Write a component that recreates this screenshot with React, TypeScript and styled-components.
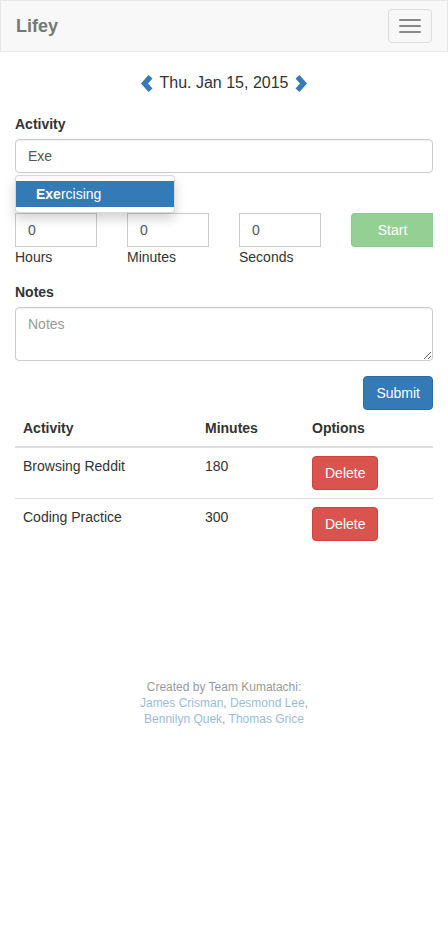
import React from "react";
import styled, { createGlobalStyle } from "styled-components";

const Global = createGlobalStyle`
  html, body { margin: 0; padding: 0; background: #fff; }
  body {
    font-family: "Liberation Sans", Arial, Helvetica, sans-serif;
    font-size: 14px;
    line-height: 1.42857143;
    color: #333;
  }
  * { box-sizing: border-box; }
`;

const Navbar = styled.nav`
  display: flex;
  align-items: flex-start;
  justify-content: space-between;
  height: 52px;
  background: #f8f8f8;
  border: 1px solid #e7e7e7;
  margin-bottom: 20px;
`;

const Brand = styled.a`
  display: block;
  padding: 15px 15px;
  font-size: 18px;
  line-height: 20px;
  font-weight: 700;
  color: #777;
  text-decoration: none;
`;

const Toggle = styled.button`
  display: flex;
  flex-direction: column;
  gap: 4px;
  align-items: center;
  justify-content: center;
  width: 44px;
  height: 34px;
  margin: 8px 15px 0 0;
  padding: 0;
  background: transparent;
  border: 1px solid #ddd;
  border-radius: 4px;
`;

const Bar = styled.span`
  display: block;
  width: 22px;
  height: 2px;
  border-radius: 1px;
  background: #888;
`;

const Container = styled.div`
  padding: 0 15px;
`;

const DateRow = styled.div`
  display: flex;
  justify-content: center;
  align-items: center;
  gap: 7px;
  font-size: 16px;
  line-height: 22px;
  margin-bottom: 20px;
`;

const Chevron = styled.svg`
  display: block;
  width: 12px;
  height: 17px;
`;

const FormGroup = styled.div`
  position: relative;
  margin-bottom: 15px;
`;

const Label = styled.label`
  display: block;
  font-weight: 700;
  margin-bottom: 5px;
`;

const Spacer = styled.div`
  height: 20px;
  margin-bottom: 5px;
`;

const TextInput = styled.input<{ $square?: boolean }>`
  display: block;
  width: 100%;
  height: 34px;
  padding: 6px 12px;
  font-family: inherit;
  font-size: 14px;
  line-height: 20px;
  color: #555;
  background: #fff;
  border: 1px solid #ccc;
  border-radius: ${(p) => (p.$square ? "0" : "4px")};
  box-shadow: ${(p) => (p.$square ? "none" : "inset 0 1px 1px rgba(0,0,0,.075)")};
  outline: none;
`;

const Menu = styled.ul`
  position: absolute;
  top: 61px;
  left: 0;
  z-index: 10;
  width: 160px;
  margin: 0;
  padding: 5px 0;
  list-style: none;
  background: #fff;
  border: 1px solid rgba(0,0,0,.15);
  border-radius: 4px;
  box-shadow: 0 6px 12px rgba(0,0,0,.175);
`;

const MenuItem = styled.li<{ $active?: boolean }>`
  display: block;
  padding: 3px 20px;
  line-height: 20px;
  color: ${(p) => (p.$active ? "#fff" : "#333")};
  background: ${(p) => (p.$active ? "#337ab7" : "transparent")};
  white-space: nowrap;
`;

const DurationGrid = styled.div`
  display: grid;
  grid-template-columns: repeat(4, 82px);
  column-gap: 30px;
`;

const SubLabel = styled.div`
  line-height: 20px;
`;

const Button = styled.button<{ $variant: "primary" | "danger" | "success"; $disabled?: boolean }>`
  display: inline-block;
  height: 34px;
  padding: 6px 12px;
  font-family: inherit;
  font-size: 14px;
  line-height: 20px;
  color: #fff;
  border: 1px solid
    ${(p) => (p.$variant === "primary" ? "#2e6da4" : p.$variant === "danger" ? "#d43f3a" : "#4cae4c")};
  background: ${(p) => (p.$variant === "primary" ? "#337ab7" : p.$variant === "danger" ? "#d9534f" : "#5cb85c")};
  border-radius: 4px;
  opacity: ${(p) => (p.$disabled ? 0.65 : 1)};
`;

const StartButton = styled(Button)`
  width: 82px;
  border-radius: 4px 0 0 4px;
  border-right: none;
`;

const TextArea = styled.textarea`
  display: block;
  width: 100%;
  height: 54px;
  padding: 6px 12px;
  font-family: inherit;
  font-size: 14px;
  line-height: 20px;
  color: #555;
  border: 1px solid #ccc;
  border-radius: 4px;
  box-shadow: inset 0 1px 1px rgba(0,0,0,.075);
  outline: none;
  &::placeholder { color: #999; }
`;

const SubmitRow = styled.div`
  display: flex;
  justify-content: flex-end;
`;

const Table = styled.table`
  width: 100%;
  border-collapse: collapse;
  margin-bottom: 20px;
`;

const Th = styled.th<{ $w?: number }>`
  width: ${(p) => (p.$w ? `${p.$w}px` : "auto")};
  padding: 8px;
  text-align: left;
  line-height: 20px;
  vertical-align: bottom;
  border-bottom: 2px solid #ddd;
`;

const Td = styled.td`
  padding: 8px;
  line-height: 20px;
  vertical-align: top;
  border-top: 1px solid #ddd;
`;

const Row = styled.tr`
  &:first-child td { border-top: 0; }
`;

const Footer = styled.footer`
  padding-top: 110px;
  text-align: center;
  font-size: 12px;
  line-height: 16px;
  opacity: 0.5;
`;

const Link = styled.a`
  color: #337ab7;
  text-decoration: none;
`;

const ChevronLeft = () => (
  <Chevron viewBox="0 0 12 17">
    <polygon points="7.5,0 11.5,3.5 7,8.5 11.5,13.5 7.5,17 0,8.5" fill="#337ab7" />
  </Chevron>
);

const ChevronRight = () => (
  <Chevron viewBox="0 0 12 17">
    <polygon points="4.5,0 0.5,3.5 5,8.5 0.5,13.5 4.5,17 12,8.5" fill="#337ab7" />
  </Chevron>
);

const rows = [
  { name: "Browsing Reddit", minutes: 180 },
  { name: "Coding Practice", minutes: 300 },
];

export default function App() {
  return (
    <>
      <Global />
      <Navbar>
        <Brand href="#">Lifey</Brand>
        <Toggle aria-label="menu">
          <Bar />
          <Bar />
          <Bar />
        </Toggle>
      </Navbar>
      <Container>
        <DateRow>
          <ChevronLeft />
          <span>Thu. Jan 15, 2015</span>
          <ChevronRight />
        </DateRow>

        <FormGroup>
          <Label>Activity</Label>
          <TextInput defaultValue="Exe" />
          <Menu>
            <MenuItem $active>
              <strong>Exe</strong>rcising
            </MenuItem>
          </Menu>
        </FormGroup>

        <FormGroup>
          <Spacer />
          <DurationGrid>
            <TextInput $square defaultValue="0" />
            <TextInput $square defaultValue="0" />
            <TextInput $square defaultValue="0" />
            <StartButton $variant="success" $disabled>Start</StartButton>
            <SubLabel>Hours</SubLabel>
            <SubLabel>Minutes</SubLabel>
            <SubLabel>Seconds</SubLabel>
          </DurationGrid>
        </FormGroup>

        <FormGroup>
          <Label>Notes</Label>
          <TextArea placeholder="Notes" />
        </FormGroup>

        <SubmitRow>
          <Button $variant="primary">Submit</Button>
        </SubmitRow>

        <Table>
          <thead>
            <tr>
              <Th $w={182}>Activity</Th>
              <Th $w={107}>Minutes</Th>
              <Th>Options</Th>
            </tr>
          </thead>
          <tbody>
            {rows.map((r) => (
              <Row key={r.name}>
                <Td>{r.name}</Td>
                <Td>{r.minutes}</Td>
                <Td>
                  <Button $variant="danger">Delete</Button>
                </Td>
              </Row>
            ))}
          </tbody>
        </Table>

        <Footer>
          Created by Team Kumatachi:
          <br />
          <Link href="#">James Crisman</Link>, <Link href="#">Desmond Lee</Link>,
          <br />
          <Link href="#">Bennilyn Quek</Link>, <Link href="#">Thomas Grice</Link>
        </Footer>
      </Container>
    </>
  );
}
